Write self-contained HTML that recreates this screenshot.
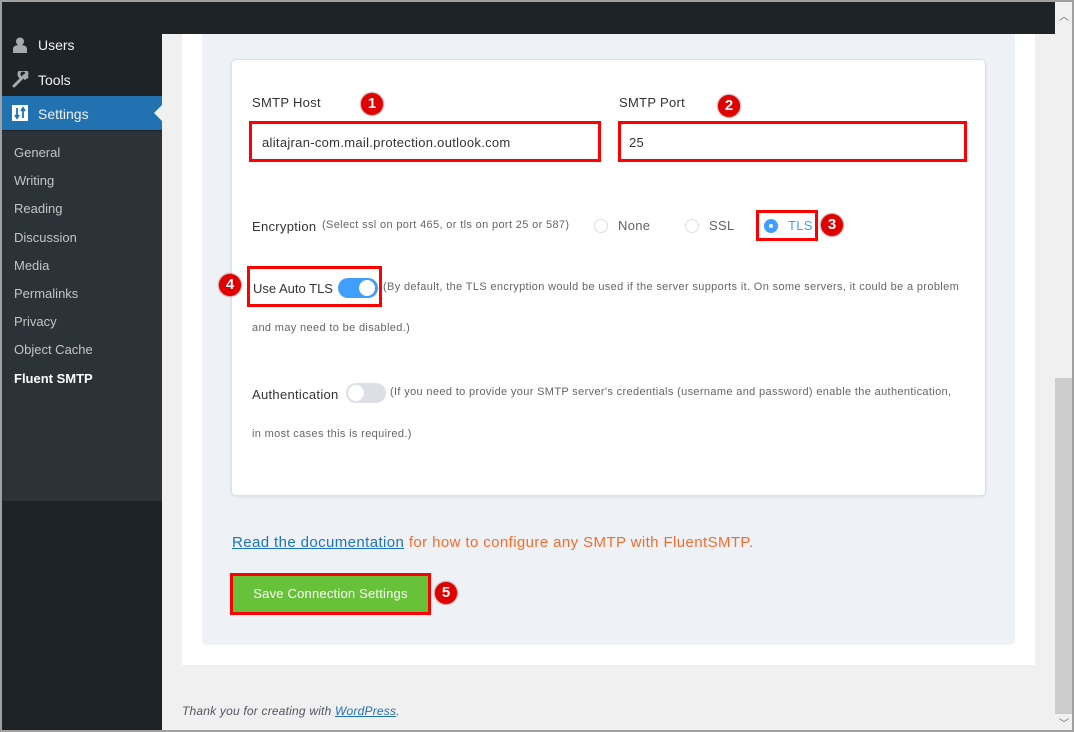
<!DOCTYPE html><html><head><style>
*{margin:0;padding:0;box-sizing:border-box}
body{width:1074px;height:732px;position:relative;overflow:hidden;background:#f0f0f1;font-family:"Liberation Sans",sans-serif;}
.a{position:absolute}
.frame{position:absolute;left:0;top:0;width:1074px;height:732px;border:2px solid #a0a0a0;pointer-events:none;z-index:10}
.side{left:0;top:0;width:162px;height:732px;background:#1d2327}
.sub{left:0;top:131px;width:162px;height:370px;background:#2c3338}
.menu{left:0;width:162px;color:#f0f0f1;font-size:14px}
.si{color:#c3c4c7;font-size:13px;left:14px}
.badge{position:absolute;width:22px;height:22px;border-radius:50%;background:#e00000;color:#fff;font-weight:bold;font-size:15px;text-align:center;line-height:22px;box-shadow:0 0 2px #800}
.red{position:absolute;border:3px solid #f00}
.lbl{font-size:13px;color:#333;letter-spacing:.3px}
.gray{font-size:11px;color:#666;letter-spacing:.35px}
</style></head><body>
<div class="a side"></div>
<div class="a sub"></div>
<div class="a" style="left:162px;top:0;width:893px;height:34px;background:#1d2327"></div>
<div class="a menu" style="top:36px;height:20px"><svg class="a" style="left:12px;top:1px" width="16" height="16"><circle cx="8" cy="4.5" r="4" fill="#a7aaad"/><path d="M1 16v-4c0-3 3-4 7-4s7 1 7 4v4z" fill="#a7aaad"/></svg><span class="a" style="left:38px;top:1px">Users</span></div>
<div class="a menu" style="top:70px;height:20px"><svg class="a" style="left:12px;top:1px" width="17" height="17"><path d="M2 15l8-8M10 7a4 4 0 1 1 5-4l-3 2 1 2 2-1" stroke="#a7aaad" stroke-width="3" fill="none" stroke-linecap="round"/></svg><span class="a" style="left:38px;top:2px">Tools</span></div>
<div class="a menu" style="top:96px;height:34px;background:#2271b1"><svg class="a" style="left:12px;top:9px" width="16" height="16"><rect width="16" height="16" fill="#fff"/><path d="M5 3v10M3 10l2 3 2-3M11 13V3M9 6l2-3 2 3" stroke="#2271b1" stroke-width="1.8" fill="none"/></svg><span class="a" style="left:38px;top:10px">Settings</span><div class="a" style="right:0;top:9px;border:8px solid transparent;border-right-color:#f0f0f1"></div></div>
<div class="a si" style="top:145px">General</div>
<div class="a si" style="top:173px">Writing</div>
<div class="a si" style="top:201px">Reading</div>
<div class="a si" style="top:230px">Discussion</div>
<div class="a si" style="top:258px">Media</div>
<div class="a si" style="top:286px">Permalinks</div>
<div class="a si" style="top:314px">Privacy</div>
<div class="a si" style="top:342px">Object Cache</div>
<div class="a si" style="top:371px;color:#fff;font-weight:bold">Fluent SMTP</div>

<div class="a" style="left:182px;top:34px;width:853px;height:631px;background:#fff"></div>
<div class="a" style="left:202px;top:34px;width:813px;height:611px;background:#eef2f6;border-radius:0 0 5px 5px"></div>
<div class="a" style="left:231px;top:59px;width:755px;height:437px;background:#fff;border:1px solid #dcdfe6;border-radius:5px;box-shadow:0 1px 3px rgba(0,0,0,.08)"></div>

<div class="a lbl" style="left:252px;top:95px">SMTP Host</div>
<div class="a lbl" style="left:619px;top:95px">SMTP Port</div>
<div class="badge" style="left:361px;top:93px">1</div>
<div class="badge" style="left:718px;top:95px">2</div>
<div class="red" style="left:249px;top:121px;width:352px;height:41px"></div>
<div class="red" style="left:618px;top:121px;width:349px;height:41px"></div>
<div class="a lbl" style="left:262px;top:135px">alitajran-com.mail.protection.outlook.com</div>
<div class="a lbl" style="left:629px;top:135px">25</div>

<div class="a lbl" style="left:252px;top:219px">Encryption</div>
<div class="a gray" style="left:322px;top:219px">(Select ssl on port 465, or tls on port 25 or 587)</div>
<div class="a" style="left:594px;top:219px;width:14px;height:14px;border:1px solid #dcdfe6;border-radius:50%"></div>
<div class="a lbl" style="left:618px;top:218px;color:#606266">None</div>
<div class="a" style="left:685px;top:219px;width:14px;height:14px;border:1px solid #dcdfe6;border-radius:50%"></div>
<div class="a lbl" style="left:709px;top:218px;color:#606266">SSL</div>
<div class="red" style="left:756px;top:210px;width:62px;height:31px"></div>
<div class="a" style="left:764px;top:219px;width:14px;height:14px;background:#409eff;border-radius:50%"><div class="a" style="left:5px;top:5px;width:4px;height:4px;background:#fff;border-radius:50%"></div></div>
<div class="a lbl" style="left:788px;top:218px;color:#409eff">TLS</div>
<div class="badge" style="left:821px;top:214px">3</div>

<div class="badge" style="left:219px;top:274px">4</div>
<div class="red" style="left:247px;top:266px;width:135px;height:41px"></div>
<div class="a lbl" style="left:253px;top:281px;letter-spacing:0">Use Auto TLS</div>
<div class="a" style="left:338px;top:278px;width:40px;height:20px;background:#409eff;border-radius:10px"><div class="a" style="left:21px;top:2px;width:16px;height:16px;background:#fff;border-radius:50%"></div></div>
<div class="a gray" style="left:383px;top:281px">(By default, the TLS encryption would be used if the server supports it. On some servers, it could be a problem</div>
<div class="a gray" style="left:252px;top:322px">and may need to be disabled.)</div>

<div class="a lbl" style="left:252px;top:387px">Authentication</div>
<div class="a" style="left:346px;top:383px;width:40px;height:20px;background:#dcdfe6;border-radius:10px"><div class="a" style="left:2px;top:2px;width:16px;height:16px;background:#fff;border-radius:50%"></div></div>
<div class="a gray" style="left:390px;top:386px">(If you need to provide your SMTP server's credentials (username and password) enable the authentication,</div>
<div class="a gray" style="left:252px;top:428px">in most cases this is required.)</div>

<div class="a" style="left:232px;top:534px;font-size:15px;color:#f56c2c;letter-spacing:.4px"><span style="color:#1e73be;text-decoration:underline">Read the documentation</span> for how to configure any SMTP with FluentSMTP.</div>
<div class="a" style="left:230px;top:573px;width:201px;height:42px;border:3px solid #f00;background:#67c23a;color:#fff;font-size:13px;text-align:center;line-height:36px;letter-spacing:.2px">Save Connection Settings</div>
<div class="badge" style="left:435px;top:582px">5</div>

<div class="a" style="left:182px;top:704px;font-size:12px;font-style:italic;color:#50575e;letter-spacing:.2px">Thank you for creating with <span style="color:#2271b1;text-decoration:underline">WordPress</span>.</div>

<div class="a" style="left:1055px;top:0;width:19px;height:732px;background:#f0f0f0"></div>
<div class="a" style="left:1055px;top:378px;width:17px;height:336px;background:#cdcdcd"></div>
<div class="a" style="left:1059px;top:8px;font-size:10px;color:#606060">︿</div>
<div class="a" style="left:1059px;top:715px;font-size:10px;color:#606060">﹀</div>
<div class="frame"></div>
</body></html>
